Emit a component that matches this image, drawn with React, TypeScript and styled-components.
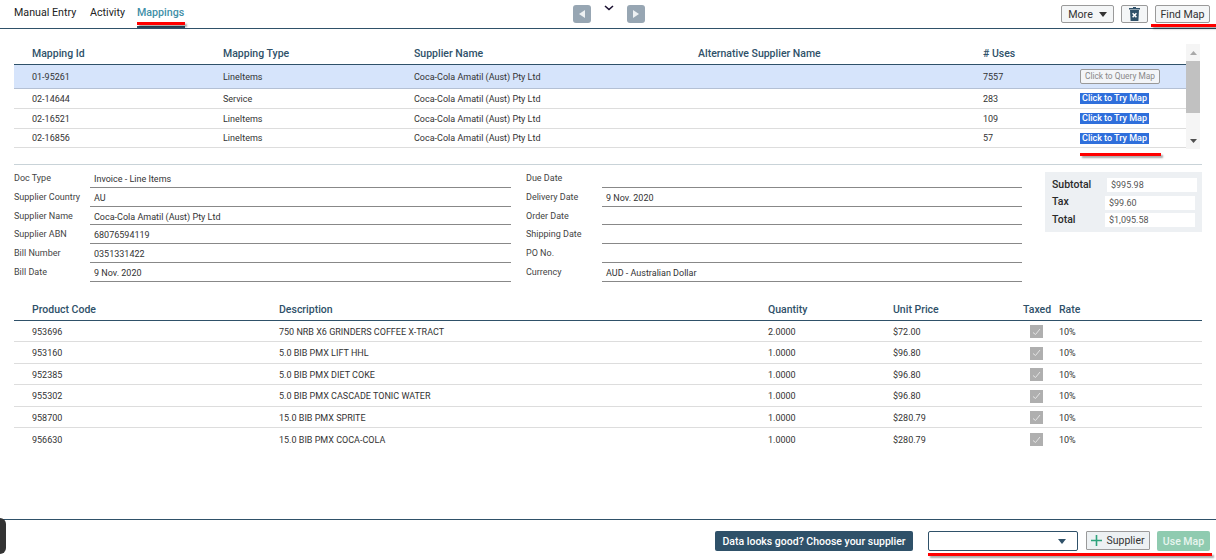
import React from "react";
import styled, { createGlobalStyle } from "styled-components";

const Global = createGlobalStyle`
  html, body { margin: 0; padding: 0; background: #fff; }
  body { font-family: Roboto, "Liberation Sans", Arial, sans-serif; color: #333; overflow: hidden; }
`;
const Page = styled.div`
  position: relative; width: 1216px; height: 560px; overflow: hidden;
  display: flex; flex-direction: column;
`;
const TopBar = styled.div`
  height: 28px; border-bottom: 1px solid #2f5169; flex: none; box-sizing: content-box;
  display: grid; grid-template-columns: 1fr auto 1fr; align-items: start;
`;
const Tabs = styled.div`display: grid; grid-template-columns: 76px 47px 48px; padding: 6px 0 0 14px;`;
const Tab = styled.div<{ $active?: boolean }>`
  position: relative; font-size: 10.7px; line-height: 13px; height: 22px; white-space: nowrap;
  color: ${p => (p.$active ? "#3f8fa8" : "#222")};
  font-weight: ${p => (p.$active ? 500 : 400)};
  ${p => p.$active ? "border-bottom: 2px solid #2f5169; box-sizing: border-box;" : ""}
`;
const Pager = styled.div`display: flex; gap: 13px; padding: 5px 0 0 0; margin-left: 2px;`;
const PageBtn = styled.div`
  width: 18px; height: 18px; border-radius: 3px; background: #97a6b3;
  display: flex; align-items: center; justify-content: center;
`;
const Tools = styled.div`display: flex; justify-content: flex-end; gap: 7px; padding: 5px 6px 0 0;`;
const ToolBtn = styled.div<{ $w: number }>`
  width: ${p => p.$w}px; height: 18px; border: 1px solid #9a9a9a; border-radius: 2px; background: #f4f6f7; color: #333;
  font-size: 10.7px; display: flex; align-items: center; justify-content: center; gap: 6px; box-sizing: border-box;
`;
const Mark = styled.div<{ $x: number; $y: number; $w: number }>`
  position: absolute; left: ${p => p.$x}px; top: ${p => p.$y}px; width: ${p => p.$w}px; height: 3px;
  background: #f00; box-shadow: 2px 2px 2px rgba(0,0,0,.35);
`;
const MapArea = styled.div`
  margin: 15px 16px 0 14px; display: flex; height: 105px; flex: none;
`;
const MapTable = styled.div`flex: 1; min-width: 0;`;
const MapRowBox = styled.div<{ $head?: boolean; $sel?: boolean; $h: number }>`
  display: grid; grid-template-columns: 191px 191px 284px 285px 97px 1fr;
  padding: ${p => (p.$head ? "0 0 2px 18px" : "0 0 0 18px")}; align-items: center; height: ${p => p.$h}px; box-sizing: border-box;
  font-size: ${p => (p.$head ? "10.5px" : "9px")};
  font-weight: ${p => (p.$head ? 500 : 400)};
  color: ${p => (p.$head ? "#2f5169" : "#333")};
  background: ${p => (p.$sel ? "#d6e4fb" : "transparent")};
  border-bottom: ${p => (p.$head ? "1px solid #2f5169" : p.$sel ? "1px solid #b4c0d4" : "1px solid #ddd")};
`;
const TryMap = styled.span`
  display: inline-block; background: #2f6fdb; color: #fff; font-size: 9px; font-weight: 500;
  line-height: 11px; padding: 0 2px; width: 69px; box-sizing: border-box; white-space: nowrap;
`;
const QueryMap = styled.span`
  display: inline-block; border: 1px solid #999; border-radius: 2px; background: #f3f5f8; color: #888;
  font-size: 8.4px; line-height: 13px; width: 80px; text-align: center; box-sizing: border-box; white-space: nowrap;
`;
const Scroll = styled.div`
  width: 14px; background: #f5f5f5; flex: none; display: flex; flex-direction: column; align-items: center;
`;
const ScrollEnd = styled.div`height: 17px; flex: none; display: flex; align-items: center; justify-content: center;`;
const Thumb = styled.div`width: 14px; height: 52px; background: #c1c1c1; flex: none;`;
const ScrollGap = styled.div`flex: 1;`;
const Divider = styled.div`height: 1px; background: #c9d3d8; margin: 15px 14px 0; flex: none;`;
const Middle = styled.div`display: flex; margin: 4px 14px 0; flex: none;`;
const Form = styled.div`
  display: grid; grid-template-columns: 497px 1fr; column-gap: 15px; width: 1008px; flex: none;
`;
const FormCol = styled.div`display: flex; flex-direction: column;`;
const Field = styled.div`display: flex; height: 18.8px; align-items: stretch;`;
const FieldLabel = styled.div`width: 76px; flex: none; font-size: 9px; color: #444; line-height: 13px; padding-top: 3px; box-sizing: border-box;`;
const FieldValue = styled.div`
  flex: 1; border-bottom: 1px solid #888; font-size: 9px; color: #333; padding: 4px 0 0 4px; line-height: 13px; box-sizing: border-box;
`;
const Totals = styled.div`
  margin: 3px 0 0 23px; width: 157px; height: 60px; background: #edf0f3; box-sizing: border-box; padding: 6px 5px 0 7px;
  display: flex; flex-direction: column; gap: 3.5px; flex: none;
`;
const TotalRow = styled.div`display: flex; justify-content: space-between; align-items: center; height: 14px;`;
const TotalLabel = styled.div`font-size: 10.5px; font-weight: 500; color: #2a2a2a; padding-bottom: 2px;`;
const TotalValue = styled.div<{ $first: boolean }>`
  width: 90px; height: 14px; background: #fff; font-size: 9px; color: #555; line-height: 14px; padding-left: 4px; box-sizing: border-box;
  margin-right: ${p => (p.$first ? 0 : 2)}px;
`;
const Products = styled.div`margin: 18px 14px 0; flex: none;`;
const ProdRow = styled.div<{ $head?: boolean }>`
  display: grid; grid-template-columns: 247px 489px 125px 130px 36px 1fr; padding: ${p => (p.$head ? "0 0 0 18px" : "1px 0 0 18px")}; align-items: center;
  height: ${p => (p.$head ? "21px" : "21.5px")}; box-sizing: border-box;
  font-size: ${p => (p.$head ? "10.5px" : "9px")};
  font-weight: ${p => (p.$head ? 500 : 400)};
  color: ${p => (p.$head ? "#2f5169" : "#333")};
  border-bottom: ${p => (p.$head ? "1px solid #2f5169" : "1px solid #ddd")};
  &:last-child { border-bottom: none; }
`;
const Check = styled.div`
  width: 13px; height: 13px; background: #afafaf; margin-left: 7px; display: flex; align-items: center; justify-content: center;
`;
const Spacer = styled.div`flex: 1;`;
const Footer = styled.div`
  height: 41px; flex: none; border-top: 1px solid #2f5169; display: flex; justify-content: flex-end; align-items: flex-start;
  padding: 11px 6px 0 0; box-sizing: border-box;
`;
const Hint = styled.div`
  width: 198px; height: 20px; background: #2f5169; border-radius: 2px; color: #fff; font-size: 10.5px; font-weight: 500;
  display: flex; align-items: center; justify-content: center; white-space: nowrap; margin-right: 15px;
`;
const SelectBox = styled.div`
  width: 150px; height: 20px; border: 1px solid #2f5169; border-radius: 2px; box-sizing: border-box; margin-right: 8px;
  display: flex; align-items: center; justify-content: flex-end; padding-right: 11px;
`;
const AddBtn = styled.div`
  width: 64px; height: 19px; border: 1px solid #9a9a9a; background: #edf1f3; box-sizing: border-box; border-radius: 1px;
  font-size: 10.5px; color: #333; display: flex; align-items: center; justify-content: center; gap: 4px; margin-right: 7px;
`;
const UseBtn = styled.div`
  width: 53px; height: 20px; background: #8fcbb0; color: #e8f5ef; border-radius: 2px; font-size: 10.5px; font-weight: 500;
  display: flex; align-items: center; justify-content: center;
`;
const Blob = styled.div`
  position: absolute; left: 0; top: 518px; width: 6px; height: 36px; background: #333; border-radius: 0 6px 6px 0;
`;

const Down = ({ c = "#333", w = 9 }: { c?: string; w?: number }) => (
  <svg width={w} height={w / 2 + 1} viewBox="0 0 10 6"><path d="M0 0h10L5 6z" fill={c} /></svg>
);

const maps = [
  ["02-14644", "Service", "283"],
  ["02-16521", "LineItems", "109"],
  ["02-16856", "LineItems", "57"],
];
const left = [
  ["Doc Type", "Invoice - Line Items"],
  ["Supplier Country", "AU"],
  ["Supplier Name", "Coca-Cola Amatil (Aust) Pty Ltd"],
  ["Supplier ABN", "68076594119"],
  ["Bill Number", "0351331422"],
  ["Bill Date", "9 Nov. 2020"],
];
const right = [
  ["Due Date", ""],
  ["Delivery Date", "9 Nov. 2020"],
  ["Order Date", ""],
  ["Shipping Date", ""],
  ["PO No.", ""],
  ["Currency", "AUD - Australian Dollar"],
];
const totals = [["Subtotal", "$995.98"], ["Tax", "$99.60"], ["Total", "$1,095.58"]];
const products = [
  ["953696", "750 NRB X6 GRINDERS COFFEE X-TRACT", "2.0000", "$72.00"],
  ["953160", "5.0 BIB PMX LIFT HHL", "1.0000", "$96.80"],
  ["952385", "5.0 BIB PMX DIET COKE", "1.0000", "$96.80"],
  ["955302", "5.0 BIB PMX CASCADE TONIC WATER", "1.0000", "$96.80"],
  ["958700", "15.0 BIB PMX SPRITE", "1.0000", "$280.79"],
  ["956630", "15.0 BIB PMX COCA-COLA", "1.0000", "$280.79"],
];
const SUP = "Coca-Cola Amatil (Aust) Pty Ltd";

export default function App() {
  return (
    <Page>
      <Global />
      <TopBar>
        <Tabs>
          <Tab>Manual Entry</Tab>
          <Tab>Activity</Tab>
          <Tab $active>Mappings</Tab>
        </Tabs>
        <Pager>
          <PageBtn><svg width="6" height="8" viewBox="0 0 6 8"><path d="M6 0v8L0 4z" fill="#eef1f3" /></svg></PageBtn>
          <svg width="10" height="6" viewBox="0 0 10 6"><path d="M1 1l4 3.5L9 1" fill="none" stroke="#1a1030" strokeWidth="1.6" /></svg>
          <PageBtn><svg width="6" height="8" viewBox="0 0 6 8"><path d="M0 0v8l6-4z" fill="#eef1f3" /></svg></PageBtn>
        </Pager>
        <Tools>
          <ToolBtn $w={53}>More <Down c="#333" w={8} /></ToolBtn>
          <ToolBtn $w={27}>
            <svg width="11" height="14" viewBox="0 0 11 14">
              <path d="M4 0h3v1h4v1.5H0V1h4z" fill="#2f5169" />
              <path d="M1 3h9l-.6 11H1.6z" fill="#2f5169" />
              <path d="M3.6 6.2l3.8 4M7.4 6.2l-3.8 4" stroke="#fff" strokeWidth="1.5" />
            </svg>
          </ToolBtn>
          <ToolBtn $w={55}>Find Map</ToolBtn>
        </Tools>
      </TopBar>

      <MapArea>
        <MapTable>
          <MapRowBox $head $h={21}>
            <span>Mapping Id</span><span>Mapping Type</span><span>Supplier Name</span>
            <span>Alternative Supplier Name</span><span># Uses</span><span />
          </MapRowBox>
          <MapRowBox $sel $h={24}>
            <span>01-95261</span><span>LineItems</span><span>{SUP}</span><span /><span>7557</span>
            <QueryMap>Click to Query Map</QueryMap>
          </MapRowBox>
          {maps.map((m, i) => (
            <MapRowBox key={m[0]} $h={i === 2 ? 19 : 20}>
              <span>{m[0]}</span><span>{m[1]}</span><span>{SUP}</span><span /><span>{m[2]}</span>
              <TryMap>Click to Try Map</TryMap>
            </MapRowBox>
          ))}
        </MapTable>
        <Scroll>
          <ScrollEnd><svg width="7" height="4" viewBox="0 0 7 4"><path d="M0 4h7L3.5 0z" fill="#a9a9a9" /></svg></ScrollEnd>
          <Thumb />
          <ScrollGap />
          <ScrollEnd><svg width="7" height="4" viewBox="0 0 7 4"><path d="M0 0h7L3.5 4z" fill="#505050" /></svg></ScrollEnd>
        </Scroll>
      </MapArea>

      <Divider />

      <Middle>
        <Form>
          <FormCol>
            {left.map(([l, v]) => (
              <Field key={l}><FieldLabel>{l}</FieldLabel><FieldValue>{v}</FieldValue></Field>
            ))}
          </FormCol>
          <FormCol>
            {right.map(([l, v]) => (
              <Field key={l}><FieldLabel>{l}</FieldLabel><FieldValue>{v}</FieldValue></Field>
            ))}
          </FormCol>
        </Form>
        <Totals>
          {totals.map(([l, v], i) => (
            <TotalRow key={l}><TotalLabel>{l}</TotalLabel><TotalValue $first={i === 0}>{v}</TotalValue></TotalRow>
          ))}
        </Totals>
      </Middle>

      <Products>
        <ProdRow $head>
          <span>Product Code</span><span>Description</span><span>Quantity</span><span>Unit Price</span><span>Taxed</span><span>Rate</span>
        </ProdRow>
        {products.map(p => (
          <ProdRow key={p[0]}>
            <span>{p[0]}</span><span>{p[1]}</span><span>{p[2]}</span><span>{p[3]}</span>
            <Check><svg width="9" height="8" viewBox="0 0 9 8"><path d="M1 4.5l2.5 2L8 1" fill="none" stroke="#e4e4e4" strokeWidth="1" /></svg></Check>
            <span>10%</span>
          </ProdRow>
        ))}
      </Products>

      <Spacer />

      <Footer>
        <Hint>Data looks good? Choose your supplier</Hint>
        <SelectBox><Down c="#2f5169" w={8} /></SelectBox>
        <AddBtn>
          <svg width="11" height="11" viewBox="0 0 11 11"><path d="M5.5 0v11M0 5.5h11" stroke="#2fa37c" strokeWidth="1.6" /></svg>
          Supplier
        </AddBtn>
        <UseBtn>Use Map</UseBtn>
      </Footer>

      <Blob />
      <Mark $x={137} $y={22} $w={48} />
      <Mark $x={1151} $y={24} $w={65} />
      <Mark $x={1080} $y={153} $w={81} />
      <Mark $x={928} $y={553} $w={284} />
    </Page>
  );
}
